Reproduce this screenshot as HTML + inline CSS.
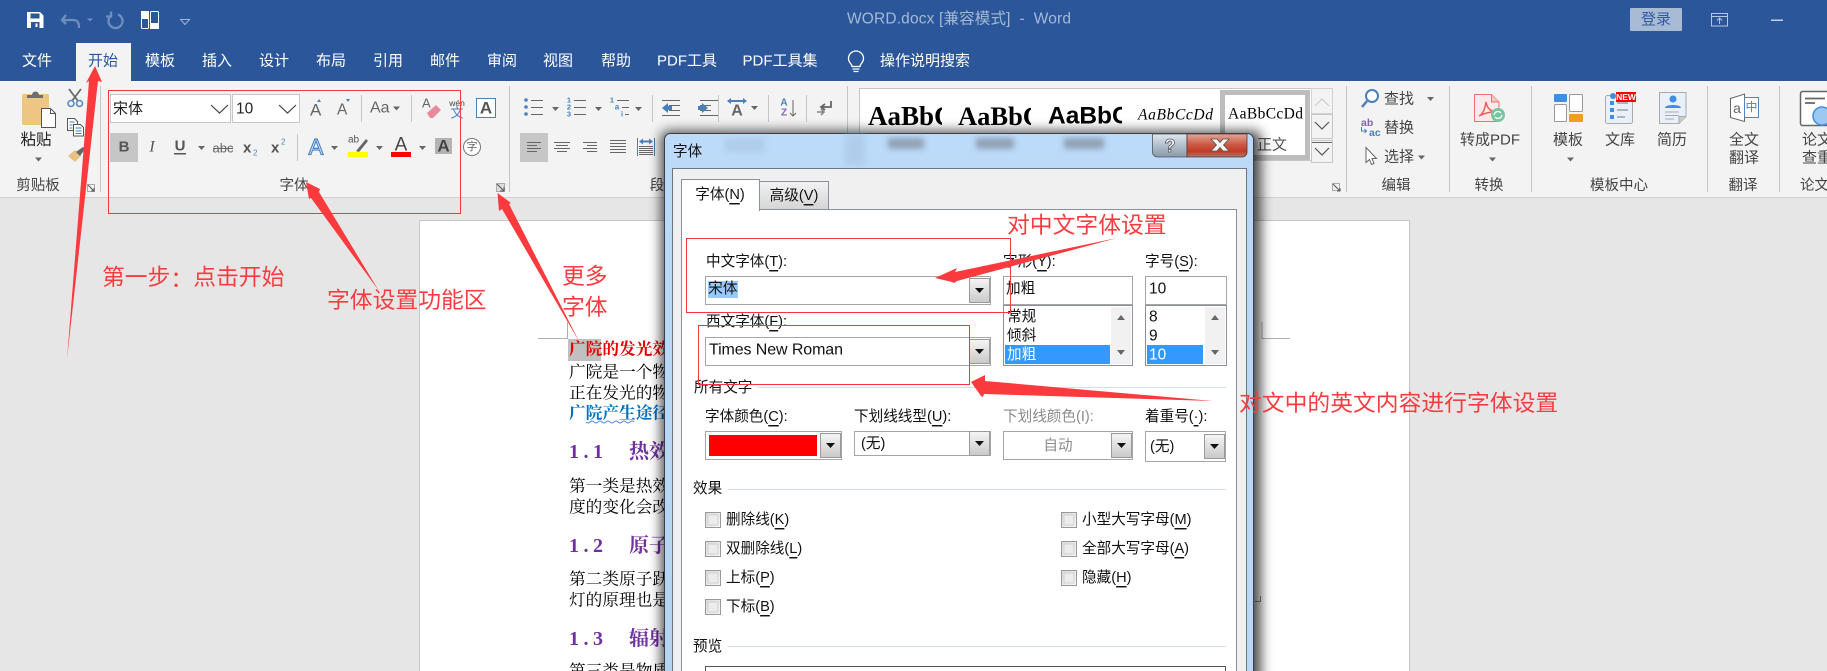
<!DOCTYPE html>
<html lang="zh"><head><meta charset="utf-8"><title>WORD.docx</title>
<style>
html,body{margin:0;padding:0;background:#e6e6e6;width:1827px;height:671px;overflow:hidden}
svg{display:block}
text{font-family:"Liberation Sans","Noto Sans CJK SC",sans-serif;dominant-baseline:central}
.tab{font-size:15px;fill:#fff;text-anchor:middle}
.r{font-size:15px;fill:#444}
.m{text-anchor:middle}
.lb{font-size:14.5px;fill:#444;text-anchor:middle}
.d{font-size:14.6px;fill:#111}
.dg{font-size:14.6px;fill:#8b8b8b}
.doc{font-family:"Liberation Serif","Noto Serif CJK SC",serif;font-size:16.7px;fill:#000}
.h{font-family:"Liberation Serif","Noto Serif CJK SC",serif;font-size:20px;fill:#7030a0;font-weight:700}
.an{font-size:22.8px;fill:#f93c40}
.u{text-decoration:underline}
</style></head><body>
<svg width="1827" height="671" viewBox="0 0 1827 671" xmlns="http://www.w3.org/2000/svg">
<defs>
<linearGradient id="btn" x1="0" y1="0" x2="0" y2="1"><stop offset="0" stop-color="#f5f5f5"/><stop offset="1" stop-color="#c9c9c9"/></linearGradient>
<linearGradient id="close" x1="0" y1="0" x2="0" y2="1"><stop offset="0" stop-color="#e0a79c"/><stop offset=".45" stop-color="#cc5a46"/><stop offset=".75" stop-color="#c23b25"/><stop offset="1" stop-color="#a8796f"/></linearGradient>
<linearGradient id="help" x1="0" y1="0" x2="0" y2="1"><stop offset="0" stop-color="#dfe6ee"/><stop offset=".5" stop-color="#b3bfcc"/><stop offset="1" stop-color="#8b98a8"/></linearGradient>
<linearGradient id="glass" x1="0" y1="0" x2="0" y2="1"><stop offset="0" stop-color="#bcdaf9"/><stop offset="1" stop-color="#b4d3f1"/></linearGradient>
<linearGradient id="tab2" x1="0" y1="0" x2="0" y2="1"><stop offset="0" stop-color="#f2f2f2"/><stop offset="1" stop-color="#d5d5d5"/></linearGradient>
<linearGradient id="cb" x1="0" y1="0" x2="1" y2="1"><stop offset="0" stop-color="#d9d9d9"/><stop offset="1" stop-color="#f8f8f8"/></linearGradient>
<filter id="bl" x="-10%" y="-10%" width="120%" height="120%"><feGaussianBlur stdDeviation="6"/></filter>
<filter id="bl2" x="-30%" y="-60%" width="160%" height="220%"><feGaussianBlur stdDeviation="3"/></filter>
<g id="dd"><rect x=".5" y=".5" width="20" height="24" fill="url(#btn)" stroke="#9a9a9a"/><path d="M6 10h9l-4.5 5z" fill="#111"/></g>
<g id="cbx"><rect x=".5" y=".5" width="15" height="15" fill="url(#cb)" stroke="#999"/><rect x="3" y="3" width="10" height="10" fill="#ececec" stroke="#d0d0d0"/></g>
</defs>

<!-- base -->
<rect width="1827" height="671" fill="#e6e6e6"/>
<rect width="1827" height="81" fill="#2b579a"/>
<rect y="81" width="1827" height="116" fill="#f3f3f3"/>
<rect y="197" width="1827" height="1" fill="#d0d0d0"/>

<!-- QAT -->
<path d="M27 12h13l3.500 3.500V28H27z" fill="#fff"/><rect x="30.500" y="13.500" width="9" height="5" fill="#2b579a"/><rect x="31" y="22" width="8.500" height="6" fill="#2b579a"/><rect x="35.500" y="23.500" width="2" height="3.500" fill="#fff"/>
<path d="M66 15l-4 5 4 4M63 20h10c5 0 6 3 6 8" fill="none" stroke="#6f8ebd" stroke-width="2.300"/>
<path d="M87 18.500h6l-3 3z" fill="#6f8ebd"/>
<path d="M118 14.500a7 7 0 1 1-6 .5M111 11.500v5h-5" fill="none" stroke="#6f8ebd" stroke-width="2.300"/>
<rect x="141.500" y="11.500" width="7" height="17" rx="1" fill="none" stroke="#fff"/><rect x="141" y="11" width="8" height="8" fill="#fff"/>
<rect x="150.500" y="11.500" width="8" height="17" rx="1" fill="none" stroke="#fff"/><rect x="150" y="23" width="9" height="6" fill="#fff"/>
<path d="M180.500 19.500h9l-4.500 5z" fill="none" stroke="#9fb5d5"/>
<text x="847" y="19" font-size="15.500" fill="#a5b9d6" textLength="224" style="white-space:pre">WORD.docx [兼容模式]  -  Word</text>
<rect x="1630" y="8" width="52" height="23" rx="1" fill="#a8bad4"/>
<text class="m" x="1656" y="19.500" font-size="15" fill="#2f5c9f">登录</text>
<rect x="1711.500" y="13.500" width="16" height="12.500" fill="none" stroke="#b6c6de"/><path d="M1711 16.500h17" stroke="#b6c6de"/><path d="M1719.500 24v-6m-2.500 2.500l2.500-2.500 2.500 2.500" fill="none" stroke="#b6c6de"/>
<rect x="1771" y="19.500" width="12" height="1.500" fill="#c5d2e6"/>

<!-- tabs -->
<rect x="76" y="43" width="55" height="38" fill="#f3f3f3"/>
<text class="tab" x="37" y="61">文件</text>
<text class="tab" x="103" y="61" style="fill:#2b579a">开始</text>
<text class="tab" x="160" y="61">模板</text>
<text class="tab" x="217" y="61">插入</text>
<text class="tab" x="274" y="61">设计</text>
<text class="tab" x="331" y="61">布局</text>
<text class="tab" x="388" y="61">引用</text>
<text class="tab" x="445" y="61">邮件</text>
<text class="tab" x="502" y="61">审阅</text>
<text class="tab" x="558" y="61">视图</text>
<text class="tab" x="616" y="61">帮助</text>
<text class="tab" x="687" y="61">PDF工具</text>
<text class="tab" x="780" y="61">PDF工具集</text>
<path d="M852.500 69h7M853.500 71.500h5M852 66.500c0-3-3.500-3.500-3.500-8a7.500 7.500 0 0 1 15 0c0 4.500-3.500 5-3.500 8z" fill="none" stroke="#fff" stroke-width="1.300"/>
<text class="tab" x="925" y="61">操作说明搜索</text>

<!-- separators -->
<g fill="#c6c6c6">
<rect x="100" y="86" width="1" height="106"/><rect x="509" y="86" width="1" height="106"/><rect x="847" y="86" width="1" height="106"/>
<rect x="1346" y="86" width="1" height="106"/><rect x="1449" y="86" width="1" height="106"/><rect x="1531" y="86" width="1" height="106"/><rect x="1707" y="86" width="1" height="106"/><rect x="1779" y="86" width="1" height="106"/>
<rect x="361" y="95" width="1" height="27"/><rect x="411" y="95" width="1" height="27"/><rect x="297" y="134" width="1" height="27"/>
<rect x="652" y="95" width="1" height="27"/><rect x="718" y="95" width="1" height="27"/><rect x="768" y="95" width="1" height="27"/><rect x="806" y="95" width="1" height="27"/>
</g>

<!-- clipboard -->
<rect x="22" y="94" width="27" height="31" rx="2" fill="#edc781"/>
<path d="M27 98v-3h5a3 3 0 0 1 7 0h4v3z" fill="#6e6e6e"/>
<path d="M41.500 108.500h9l5 5v14h-14z" fill="#fff" stroke="#555"/><path d="M50.500 108.500v5h5" fill="none" stroke="#555"/>
<text class="m" x="36" y="140" font-size="15.500" fill="#222">粘贴</text>
<path d="M35 157.500h7l-3.500 4z" fill="#666"/>
<path d="M69 89l9 12M81 89l-9 12" stroke="#6a6a6a" stroke-width="1.800" fill="none"/><circle cx="71" cy="103.500" r="3" fill="none" stroke="#5a8cc4" stroke-width="1.600"/><circle cx="79.500" cy="103.500" r="3" fill="none" stroke="#5a8cc4" stroke-width="1.600"/>
<path d="M67.500 118.500h7l3 3v9h-10z" fill="#fff" stroke="#555"/><path d="M73.500 124.500h7l3 3v8.500h-10z" fill="#fff" stroke="#555"/><path d="M69.500 122h5M69.500 125h3M69.500 128h3M75.500 128h6M75.500 131h6M75.500 133.500h6" stroke="#3f7cc0"/>
<path d="M68 156l7-6 6 6-6 6z" fill="#e7c182"/><path d="M76 152l7-5 2 2-5 7z" fill="#666"/>
<text class="lb" x="38" y="186">剪贴板</text>
<rect x="87.500" y="184.500" width="7" height="7" fill="none" stroke="#aaa"/><path d="M88 185l6 6m0-3v3h-3" fill="none" stroke="#555"/>

<!-- font group row 1 -->
<rect x="110.500" y="94.500" width="120" height="28" fill="#fff" stroke="#c6c6c6"/>
<rect x="232.500" y="94.500" width="67" height="28" fill="#fff" stroke="#c6c6c6"/>
<text x="113" y="109" font-size="15" fill="#222">宋体</text>
<text x="236" y="109" font-size="15.500" fill="#222">10</text>
<path d="M211 105l8.500 8 8.500-8M279 105l8.500 8 8.500-8" fill="none" stroke="#444" stroke-width="1.200"/>
<text x="310" y="110" font-size="17" fill="#666">A</text><path d="M317 102l2-3 2 3z" fill="#4b82be"/>
<text x="337" y="110" font-size="15.500" fill="#666">A</text><path d="M346 99l2 3 2-3z" fill="#4b82be"/>
<text x="370" y="108" font-size="16" fill="#666">Aa</text><path d="M393 106.500h7l-3.500 4z" fill="#666"/>
<text x="422" y="103" font-size="13" fill="#666">A</text><path d="M427 113l9-8 5 5-8 8h-3z" fill="#e88a9e"/>
<text class="m" x="457" y="103" font-size="8.500" fill="#444">wén</text><text class="m" x="457" y="113" font-size="13" fill="#4a86c5">文</text>
<rect x="476.500" y="98.500" width="19" height="19" fill="#fff" stroke="#4a7fb9"/><text class="m" x="486" y="108" font-size="17" font-weight="700" fill="#555">A</text>

<!-- font group row 2 -->
<rect x="110" y="133" width="28" height="29" fill="#c6c6c6"/>
<text class="m" x="124" y="147" font-size="15" font-weight="700" fill="#555">B</text>
<text class="m" x="152" y="147" font-size="16" font-style="italic" fill="#555" style="font-family:'Liberation Serif',serif">I</text>
<text class="m" x="180" y="146" font-size="15" font-weight="700" fill="#555">U</text><rect x="174" y="153" width="12" height="1.500" fill="#555"/>
<path d="M198 146h7l-3.500 4z" fill="#666"/>
<text class="m" x="223" y="148" font-size="13" fill="#666">abc</text><rect x="213" y="148" width="20" height="1" fill="#666"/>
<text x="243" y="148" font-size="15" font-weight="700" fill="#555">x</text><text x="253" y="153" font-size="8" fill="#4a86c5">2</text>
<text x="271" y="148" font-size="15" font-weight="700" fill="#555">x</text><text x="281" y="142" font-size="8" fill="#4a86c5">2</text>
<text class="m" x="316" y="147" font-size="22" fill="#fff" stroke="#4a86c5" stroke-width="1.200">A</text>
<path d="M331 146h7l-3.500 4z" fill="#666"/>
<text x="348" y="140" font-size="10" fill="#555">ab</text><path d="M356 151l10-12 2 2-9 11z" fill="#666"/><rect x="348" y="152" width="20" height="5" fill="#ff0"/>
<path d="M376 146h7l-3.500 4z" fill="#666"/>
<text class="m" x="401" y="145" font-size="19" fill="#444">A</text><rect x="391" y="152" width="20" height="5" fill="#f00"/>
<path d="M419 146h7l-3.500 4z" fill="#666"/>
<rect x="435" y="138" width="17" height="16" fill="#b4b4b4"/><text class="m" x="443.500" y="146" font-size="17" font-weight="700" fill="#444">A</text>
<circle cx="472" cy="147" r="8.500" fill="#fff" stroke="#777"/><text class="m" x="472" y="147" font-size="11" fill="#666">字</text>
<text class="lb" x="294" y="186">字体</text>
<rect x="496.500" y="183.500" width="8" height="8" fill="#ddd" stroke="#aaa"/><path d="M497 184l7 7m0-4v4h-4" fill="none" stroke="#555"/>

<!-- paragraph -->
<g fill="#4a7fb9"><circle cx="526" cy="100" r="1.800"/><circle cx="526" cy="107" r="1.800"/><circle cx="526" cy="114" r="1.800"/></g>
<path d="M531 100.500h12M531 107.500h12M531 114.500h12M574 100.500h12M574 107.500h12M574 114.500h12M617 100.500h12M622 107.500h7M625 114.500h4" stroke="#666" fill="none"/>
<path d="M552 107h7l-3.500 4zM595 107h7l-3.500 4zM635 107h7l-3.500 4z" fill="#666"/>
<text class="m" x="569" y="100" font-size="7.500" font-weight="700" fill="#4a7fb9">1</text><text class="m" x="569" y="107" font-size="7.500" font-weight="700" fill="#4a7fb9">2</text><text class="m" x="569" y="114" font-size="7.500" font-weight="700" fill="#4a7fb9">3</text>
<text class="m" x="612" y="100" font-size="7.500" font-weight="700" fill="#4a7fb9">1</text><text class="m" x="617" y="107" font-size="8" font-weight="700" fill="#4a7fb9">a</text><text class="m" x="622" y="114" font-size="7.500" font-weight="700" fill="#4a7fb9">i</text>
<path d="M662 100.500h18M669 105.500h11M669 110.500h11M662 115.500h18M700 100.500h18" stroke="#666" fill="none"/>
<path d="M662 108l6-5v3h4v4h-4v3z" fill="#4a7fb9"/>
<path d="M700 105.500h11M700 110.500h11M700 115.500h18" stroke="#666" fill="none"/><path d="M708 108l-6-5v3h-4v4h4v3z" fill="#4a7fb9"/>
<text class="m" x="737" y="111" font-size="16" font-weight="700" fill="#666">A</text><path d="M727 101l4-3v2h12v-2l4 3-4 3v-2h-12v2z" fill="#4a7fb9"/>
<path d="M751 106h7l-3.500 4z" fill="#666"/>
<text class="m" x="784" y="103" font-size="10" font-weight="700" fill="#4a7fb9">A</text><text class="m" x="784" y="113" font-size="10" font-weight="700" fill="#8463b5">Z</text><path d="M793 100v16m-3-3l3 3 3-3" fill="none" stroke="#666"/>
<path d="M831 101v6h-9m3-3l-4 3 4 3" fill="none" stroke="#666" stroke-width="1.800"/><path d="M817 112h7m-3-3l3 3-3 3" fill="none" stroke="#888" stroke-width="1.600"/>
<rect x="520" y="133" width="28" height="29" fill="#c6c6c6"/>
<path d="M527 142.500h14M527 145.500h10M527 148.500h14M527 151.500h10M554 142.500h16M556 145.500h12M554 148.500h16M557 151.500h10M583 142.500h14M587 145.500h10M583 148.500h14M587 151.500h10M610 140.500h16M610 143.500h16M610 146.500h16M610 149.500h16M610 152.500h16" stroke="#666" fill="none"/>
<path d="M637.500 138v18M654.500 138v18" stroke="#4a7fb9" fill="none"/><path d="M639 141.500l4-3v2h6v-2l4 3-4 3v-2h-6v2z" fill="#4a7fb9"/><path d="M639 146.500h14M639 148.500h14M639 150.500h14M639 152.500h14M639 154.500h14" stroke="#666" fill="none"/>
<text class="lb" x="657" y="186">段</text>

<!-- style gallery -->
<rect x="859.500" y="88.500" width="452" height="72" fill="#fff" stroke="#c6c6c6"/>
<svg x="868" y="96" width="74" height="40" viewBox="868 96 74 40"><text x="868" y="116" style="font-family:'Liberation Serif',serif" font-size="27" font-weight="700" fill="#000">AaBbCc</text></svg>
<svg x="958" y="96" width="73" height="40" viewBox="958 96 73 40"><text x="958" y="116" style="font-family:'Liberation Serif',serif" font-size="26.500" font-weight="700" fill="#000">AaBbCc</text></svg>
<svg x="1048" y="96" width="74" height="40" viewBox="1048 96 74 40"><text x="1048" y="116" font-size="24.500" font-weight="700" fill="#000">AaBbCc</text></svg>
<text x="1138" y="115" style="font-family:'Liberation Serif',serif" font-size="15.500" font-style="italic" fill="#000" textLength="75">AaBbCcDd</text>
<rect x="1222.500" y="92.500" width="85" height="65" fill="#fff" stroke="#bdbdbd" stroke-width="5"/>
<text x="1228" y="114" style="font-family:'Liberation Serif',serif" font-size="15.500" fill="#000" textLength="75">AaBbCcDd</text>
<text class="m" x="1272" y="145" font-size="15" fill="#555">正文</text>
<rect x="1311.500" y="88.500" width="21" height="25" fill="#f3f3f3" stroke="#d2d2d2"/><path d="M1315 106l7-7 7 7" fill="none" stroke="#ccc" stroke-width="1.200"/>
<rect x="1311.500" y="114.500" width="21" height="24" fill="#f3f3f3" stroke="#c6c6c6"/><path d="M1315 122l7 7 7-7" fill="none" stroke="#555" stroke-width="1.200"/>
<rect x="1311.500" y="140.500" width="21" height="22" fill="#f3f3f3" stroke="#c6c6c6"/><path d="M1315 148l7 7 7-7" fill="none" stroke="#555" stroke-width="1.200"/><rect x="1312" y="142" width="20" height="1" fill="#666"/>
<rect x="1332.500" y="183.500" width="7" height="7" fill="none" stroke="#aaa"/><path d="M1333 184l7 7m0-3v3h-3" fill="none" stroke="#555"/>

<!-- editing -->
<circle cx="1372" cy="96" r="6" fill="#fff" stroke="#4a7fb9" stroke-width="2"/><path d="M1367 101l-5 6" stroke="#4a7fb9" stroke-width="2.500"/>
<text x="1384" y="99" class="r">查找</text><path d="M1427 97h7l-3.500 4z" fill="#666"/>
<text x="1361" y="123" font-size="10.500" font-weight="700" fill="#8463b5">ab</text><text x="1369" y="133" font-size="10.500" font-weight="700" fill="#4a7fb9">ac</text><path d="M1361.500 127v4h5m-2-2l2 2-2 2" fill="none" stroke="#4a7fb9"/>
<text x="1384" y="128" class="r">替换</text>
<path d="M1366 147.500v15l3.500-3 2 5 2.500-1-2-5h4.500z" fill="#fff" stroke="#666"/>
<text x="1384" y="157" class="r">选择</text><path d="M1418 155.500h7l-3.500 4z" fill="#666"/>
<text class="lb" x="1396" y="186">编辑</text>

<!-- convert -->
<path d="M1474.500 94.500h17l7.500 7.500v19.500h-24.500z" fill="#fde9e9" stroke="#ee6f6f"/><path d="M1491.500 94.500v7.500h7.500" fill="#f7c6c6" stroke="#ee6f6f"/>
<path d="M1479 116c4-2 6-7 7-14 1 5 3 8 8 10-5 0-9 1-15 4z" fill="none" stroke="#e95f5f" stroke-width="1.500"/>
<circle cx="1498" cy="115" r="7" fill="#76c6a4"/><path d="M1494 115a4 4 0 0 1 7-2m1 2a4 4 0 0 1-7 2" fill="none" stroke="#fff" stroke-width="1.200"/>
<text class="r m" x="1490" y="140">转成PDF</text><path d="M1489 157.500h7l-3.500 4z" fill="#666"/>
<text class="lb" x="1489" y="186">转换</text>

<!-- templates -->
<rect x="1554" y="94" width="13" height="8" rx="1" fill="#3e8ee4"/><rect x="1554.500" y="104.500" width="12" height="17" rx="1" fill="#fff" stroke="#999"/>
<rect x="1569.500" y="94.500" width="13" height="17" rx="1" fill="#fff" stroke="#999"/><rect x="1569" y="114" width="14" height="8" rx="1" fill="#f59a23"/>
<text class="r m" x="1568" y="140">模板</text><path d="M1567 157.500h7l-3.500 4z" fill="#666"/>
<rect x="1605.500" y="95.500" width="27" height="28" rx="2" fill="#e8f0fa" stroke="#aaa"/>
<g fill="#3e8ee4"><circle cx="1613" cy="96" r="3"/><rect x="1610" y="101" width="4" height="4"/><rect x="1610" y="108" width="4" height="4"/><rect x="1610" y="115" width="4" height="4"/></g>
<path d="M1617 103h11M1617 110h11M1617 117h8" stroke="#777" fill="none"/>
<rect x="1616" y="92" width="20" height="10" fill="#f00"/><text class="m" x="1626" y="97" font-size="8.500" font-weight="700" fill="#fff">NEW</text>
<text class="r m" x="1620" y="140">文库</text>
<path d="M1659.500 92.500h26.500v24l-7 7h-19.500z" fill="#e8f0fa" stroke="#aaa"/><path d="M1686 116.500h-7v7" fill="#ccc" stroke="#aaa"/>
<circle cx="1673" cy="99" r="3.500" fill="#3e8ee4"/><path d="M1665 108c0-4 16-4 16 0z" fill="#3e8ee4"/><path d="M1665 112h14M1665 115.500h14M1665 119h9" stroke="#aaa" fill="none"/>
<text class="r m" x="1672" y="140">简历</text>
<text class="lb" x="1619" y="186">模板中心</text>

<!-- translate -->
<path d="M1730.500 98.500l14-4.500v27.500l-14-4z" fill="#fff" stroke="#666"/><text class="m" x="1737" y="108" font-size="14" fill="#666">a</text>
<rect x="1744.500" y="97.500" width="14" height="20" fill="#fff" stroke="#4a86c5"/><text class="m" x="1751.500" y="107" font-size="12" fill="#4a86c5">中</text>
<text class="r m" x="1744" y="140">全文</text><text class="r m" x="1744" y="158">翻译</text>
<text class="lb" x="1743" y="186">翻译</text>
<rect x="1800.500" y="91.500" width="40" height="34" rx="2" fill="#fff" stroke="#666" stroke-width="1.500"/><path d="M1805 98.500h20M1805 103h10" stroke="#666" stroke-width="1.800"/><circle cx="1822" cy="116" r="9" fill="#9cc8f2" stroke="#3e8ee4" stroke-width="1.500"/>
<text class="r" x="1802" y="140">论文</text><text class="r" x="1802" y="158">查重</text>
<text class="lb" x="1800" y="186" style="text-anchor:start">论文</text>

<!-- page -->
<rect x="419.500" y="220.500" width="990" height="460" fill="#fff" stroke="#c6c6c6"/>
<path d="M538 338.500h29.500V322M1290 338.500h-28V322" fill="none" stroke="#b0b0b0"/>
<rect x="568" y="339" width="33" height="22" fill="#c0c0c0"/>
<text class="doc" x="569" y="349" style="fill:#e60000;font-weight:700">广院的发光效果</text>
<text class="doc" x="569" y="372">广院是一个物体</text>
<text class="doc" x="569" y="393">正在发光的物体</text>
<text class="doc" x="569" y="413" style="fill:#0070c0;font-weight:700">广院产生途径</text>
<path d="M586 422q2 2 4 0t4 0 4 0 4 0 4 0 4 0 4 0 4 0 4 0 4 0 4 0 4 0" fill="none" stroke="#5a8ae0"/>
<text class="h" x="569" y="452" textLength="34">1.1</text><text class="h" x="629" y="452">热效</text>
<text class="doc" x="569" y="486">第一类是热效</text>
<text class="doc" x="569" y="507">度的变化会改</text>
<text class="h" x="569" y="546" textLength="34">1.2</text><text class="h" x="629" y="546">原子</text>
<text class="doc" x="569" y="579">第二类原子跃</text>
<text class="doc" x="569" y="600">灯的原理也是</text>
<text class="h" x="569" y="639" textLength="34">1.3</text><text class="h" x="629" y="639">辐射</text>
<text class="doc" x="569" y="671">第三类是物质</text>
<path d="M1255 601.500h5.500V596" fill="none" stroke="#888"/>

<!-- dialog shadow & frame -->
<rect x="661" y="131" width="600" height="560" rx="6" fill="#000" opacity=".7" filter="url(#bl)"/>
<rect x="664.500" y="133.500" width="589" height="560" rx="6" fill="url(#glass)" stroke="#3a3f47"/>
<rect x="1247" y="170" width="6" height="510" fill="#b9d8f7"/>
<g filter="url(#bl2)" fill="#7f8b9a" opacity=".7"><rect x="888" y="138" width="36" height="11"/><rect x="976" y="138" width="38" height="11"/><rect x="1064" y="138" width="40" height="11"/></g>
<g filter="url(#bl2)" fill="#9ab5d4" opacity=".35"><rect x="725" y="138" width="40" height="14"/><rect x="845" y="134" width="20" height="32"/></g>
<rect x="672.500" y="168.500" width="574" height="510" fill="#f0f0f0" stroke="#6b7580"/>
<text x="673" y="152" font-size="14.600" fill="#111">字体</text>
<path d="M1152.500 134h34.500v23h-29a5 5 0 0 1-5.500-5z" fill="url(#help)" stroke="#4a5560" stroke-width=".8"/>
<text class="m" x="1170" y="146" font-size="18" font-weight="700" fill="#fff" stroke="#555" stroke-width=".8">?</text>
<path d="M1187 134h60v18a5 5 0 0 1-5 5h-55z" fill="url(#close)" stroke="#5a3530" stroke-width=".8"/>
<path d="M1211 139h6l3 3.500 3-3.500h6l-5.500 6 5.500 6h-6l-3-3.500-3 3.500h-6l5.500-6z" fill="#f4f4f4" stroke="#555" stroke-width=".8"/>

<!-- tabs in dialog -->
<rect x="759.500" y="181.500" width="69" height="28" fill="url(#tab2)" stroke="#8a9199"/>
<text class="d m" x="794" y="196">高级(<tspan class="u">V</tspan>)</text>
<rect x="681.500" y="209.500" width="555" height="470" fill="#fff" stroke="#8a9199"/>
<rect x="681.500" y="179.500" width="78" height="31" fill="#fff" stroke="#8a9199"/><rect x="682" y="208" width="77" height="3" fill="#fff"/>
<text class="d m" x="720" y="195">字体(<tspan class="u">N</tspan>)</text>

<!-- labels & fields -->
<text class="d" x="706" y="262">中文字体(<tspan class="u">T</tspan>):</text>
<rect x="705.500" y="276.500" width="285" height="28" fill="#fff" stroke="#a6a6a6"/>
<rect x="708" y="281" width="30" height="17" fill="#99c9f7"/>
<text class="d" x="708" y="289" style="font-size:14.800px">宋体</text>
<use href="#dd" x="969" y="278"/>

<text class="d" x="1003" y="262">字形(<tspan class="u">Y</tspan>):</text>
<rect x="1003.500" y="276.500" width="129" height="28" fill="#fff" stroke="#a6a6a6"/>
<text class="d" x="1006" y="289">加粗</text>
<rect x="1003.500" y="305.500" width="129" height="60" fill="#fff" stroke="#8a9199"/>
<text class="d" x="1007" y="317">常规</text><text class="d" x="1007" y="336">倾斜</text>
<rect x="1005" y="345" width="105" height="19" fill="#3399ff"/><text class="d" x="1007" y="355" style="fill:#fff">加粗</text>
<rect x="1111" y="307" width="20" height="57" fill="#f1f1f1"/><path d="M1117 320l4-5 4 5zM1117 350l4 5 4-5z" fill="#666"/>

<text class="d" x="1145" y="262">字号(<tspan class="u">S</tspan>):</text>
<rect x="1145.500" y="276.500" width="81" height="28" fill="#fff" stroke="#a6a6a6"/>
<text class="d" x="1149" y="289" style="font-size:15.500px">10</text>
<rect x="1145.500" y="305.500" width="81" height="60" fill="#fff" stroke="#8a9199"/>
<text class="d" x="1149" y="317" style="font-size:15.500px">8</text><text class="d" x="1149" y="336" style="font-size:15.500px">9</text>
<rect x="1147" y="345" width="56" height="19" fill="#3399ff"/><text class="d" x="1149" y="355" style="fill:#fff;font-size:15.500px">10</text>
<rect x="1205" y="307" width="20" height="57" fill="#f1f1f1"/><path d="M1211 320l4-5 4 5zM1211 350l4 5 4-5z" fill="#666"/>

<text class="d" x="706" y="322">西文字体(<tspan class="u">F</tspan>):</text>
<rect x="705.500" y="337.500" width="285" height="28" fill="#fff" stroke="#a6a6a6"/>
<text class="d" x="709" y="350" style="font-size:16px" textLength="134">Times New Roman</text>
<use href="#dd" x="969" y="339"/>

<text class="d" x="694" y="388">所有文字</text>
<rect x="758" y="387" width="468" height="1" fill="#d5dfe5"/>

<text class="d" x="705" y="417">字体颜色(<tspan class="u">C</tspan>):</text>
<rect x="705.500" y="431.500" width="136" height="28" fill="#fff" stroke="#a6a6a6"/>
<rect x="709" y="435" width="108" height="21" fill="#f00"/>
<use href="#dd" x="820" y="433"/>

<text class="d" x="854" y="417">下划线线型(<tspan class="u">U</tspan>):</text>
<rect x="854.500" y="431.500" width="136" height="24" fill="#fff" stroke="#a6a6a6"/>
<text class="d" x="861" y="444">(无)</text>
<use href="#dd" x="969" y="431"/>

<text class="dg" x="1003" y="417">下划线颜色(I):</text>
<rect x="1003.500" y="431.500" width="129" height="28" fill="#fff" stroke="#a6a6a6"/>
<text class="dg m" x="1058" y="446">自动</text>
<use href="#dd" x="1111" y="433"/>

<text class="d" x="1145" y="417">着重号(<tspan class="u">·</tspan>):</text>
<rect x="1145.500" y="431.500" width="80" height="30" fill="#fff" stroke="#a6a6a6"/>
<text class="d" x="1150" y="447">(无)</text>
<use href="#dd" x="1204" y="434"/>

<text class="d" x="693" y="489">效果</text>
<rect x="728" y="489" width="498" height="1" fill="#d5dfe5"/>
<use href="#cbx" x="705" y="512"/><text class="d" x="726" y="520">删除线(<tspan class="u">K</tspan>)</text>
<use href="#cbx" x="705" y="541"/><text class="d" x="726" y="549">双删除线(<tspan class="u">L</tspan>)</text>
<use href="#cbx" x="705" y="570"/><text class="d" x="726" y="578">上标(<tspan class="u">P</tspan>)</text>
<use href="#cbx" x="705" y="599"/><text class="d" x="726" y="607">下标(<tspan class="u">B</tspan>)</text>
<use href="#cbx" x="1061" y="512"/><text class="d" x="1082" y="520">小型大写字母(<tspan class="u">M</tspan>)</text>
<use href="#cbx" x="1061" y="541"/><text class="d" x="1082" y="549">全部大写字母(<tspan class="u">A</tspan>)</text>
<use href="#cbx" x="1061" y="570"/><text class="d" x="1082" y="578">隐藏(<tspan class="u">H</tspan>)</text>
<text class="d" x="693" y="647">预览</text>
<rect x="728" y="646" width="498" height="1" fill="#d5dfe5"/>
<rect x="705.500" y="666.500" width="520" height="20" fill="#fff" stroke="#555"/>

<!-- annotation boxes -->
<g fill="none" stroke="#f2383c">
<rect x="108.500" y="90.500" width="352" height="123"/>
<rect x="686.500" y="238.500" width="324" height="74"/>
<rect x="698.500" y="325.500" width="271" height="59"/>
</g>
<!-- arrows -->
<g fill="#fb3a3e">
<path d="M95 66l7 16-4-1-31 278 22-278-3 2z"/>
<path d="M306 182L320 189L319 192L379 291L311 198L309 199z"/>
<path d="M497.500 193L511 203L509 204L580 343L502 209L499 211z"/>
<path d="M935 278l22-10-2 4 162-34-160 43-3 2-2-1z"/>
<path d="M971 382l14-7v6l228 20-229-7-1 3-2-1z"/>
</g>
<text class="an" x="1007" y="225">对中文字体设置</text>
<text class="an" x="102" y="277">第一步<tspan style="font-family:'Noto Sans CJK TC',sans-serif">：</tspan>点击开始</text>
<text class="an" x="327" y="300">字体设置功能区</text>
<text class="an" x="562" y="276">更多</text>
<text class="an" x="562" y="307">字体</text>
<text class="an" x="1239" y="403">对文中的英文内容进行字体设置</text>
</svg>
</body></html>
